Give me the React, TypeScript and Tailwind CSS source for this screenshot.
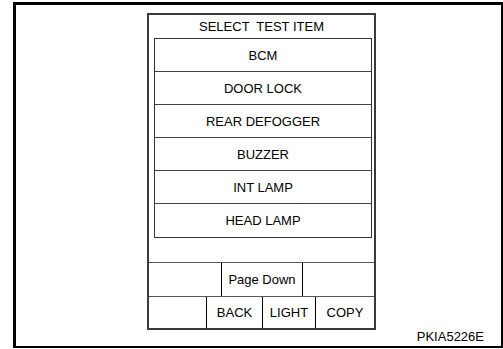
import React from 'react';

const testItems = ['BCM', 'DOOR LOCK', 'REAR DEFOGGER', 'BUZZER', 'INT LAMP', 'HEAD LAMP'];

const App = () => {
  return (
    <div
      className="w-[503px] h-[349px] bg-white pl-[13px] pt-[2px] text-black text-[13px] leading-none"
      style={{ fontFamily: '"Liberation Sans", Arial, sans-serif' }}
    >
      <div className="box-border w-[490px] h-[346px] border-l-[3px] border-t-[3px] border-r-2 border-b-2 border-black flex flex-col">
        {/* screen panel */}
        <div className="box-border ml-[131px] mt-[8px] w-[229px] h-[317px] border-2 border-[#3a3a3a] flex flex-col">
          <div className="h-[23px] flex items-center justify-center whitespace-pre">SELECT  TEST ITEM</div>

          <div className="box-border ml-[5px] w-[218px] border border-[#333]">
            {testItems.map((item, i) => (
              <div
                key={item}
                className={`h-[33px] flex items-center justify-center ${i < testItems.length - 1 ? 'border-b border-[#444]' : ''}`}
              >
                {item}
              </div>
            ))}
          </div>

          <div className="flex-1" />

          <div className="h-[34px] border-t border-[#555] flex">
            <div className="w-[72px]" />
            <div className="w-[82px] border-l border-r border-black flex items-center justify-center">Page Down</div>
            <div className="flex-1" />
          </div>

          <div className="h-[32px] border-t border-[#555] flex">
            <div className="w-[57px]" />
            <div className="w-[56px] border-l border-black flex items-center justify-center">BACK</div>
            <div className="w-[53px] border-l border-black flex items-center justify-center">LIGHT</div>
            <div className="flex-1 border-l border-black flex items-center justify-center">COPY</div>
          </div>
        </div>

        <div className="flex justify-end pr-[17px]">
          <span>PKIA5226E</span>
        </div>
      </div>
    </div>
  );
};

export default App;
